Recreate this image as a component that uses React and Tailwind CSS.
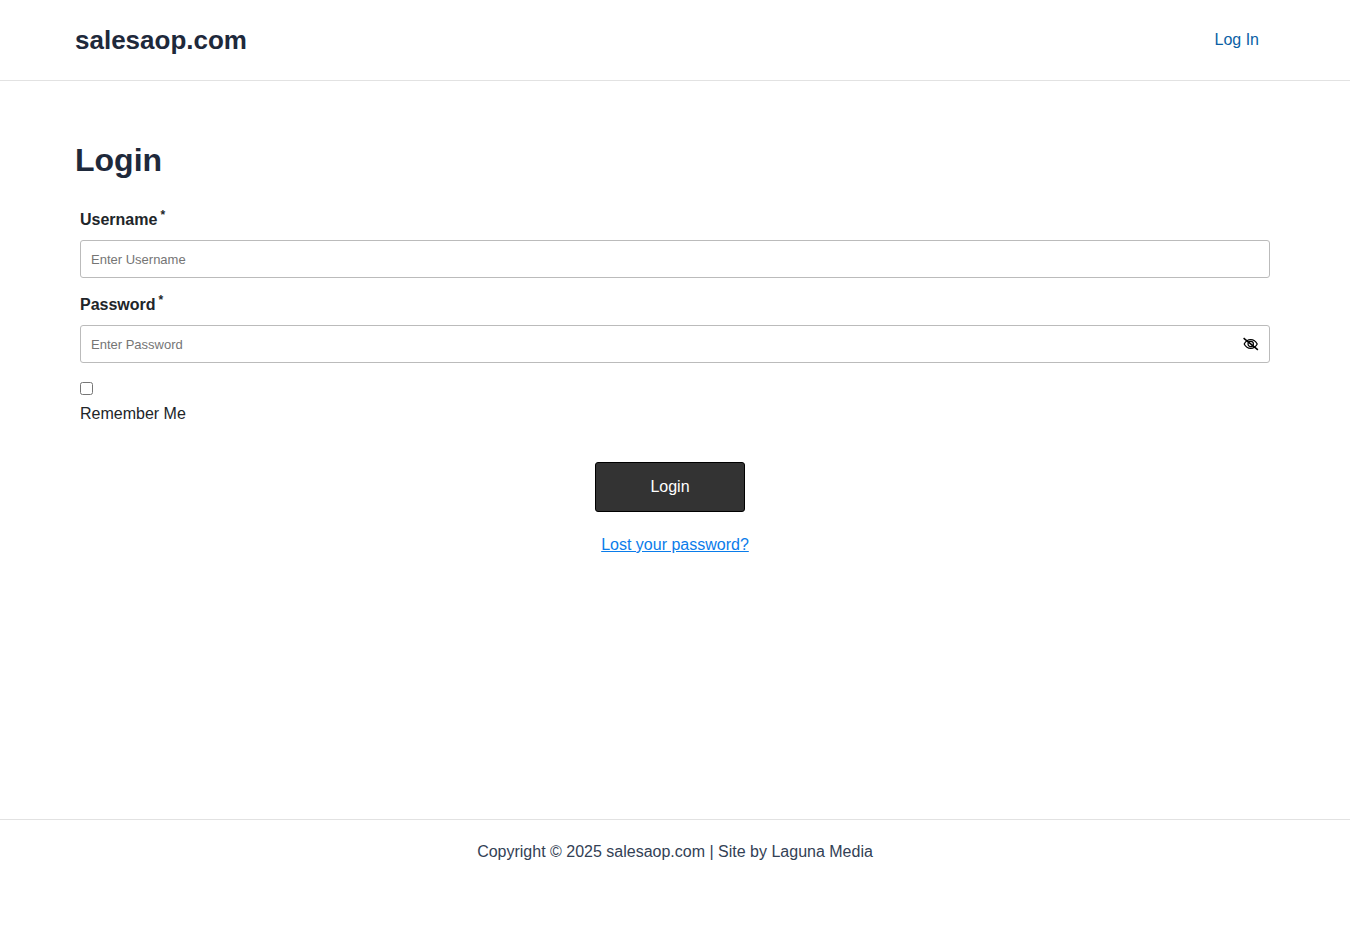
import { useState } from 'react';

const EyeSlashIcon = () => (
  <svg width="16" height="16" viewBox="0 0 16 16" fill="none" stroke="currentColor" strokeWidth="1.2" aria-hidden="true">
    <path d="M1.2 8C2.6 5.2 5 3.6 7.7 3.6S12.8 5.2 14.2 8C12.8 10.8 10.4 12.4 7.7 12.4S2.6 10.8 1.2 8Z" />
    <circle cx="7.7" cy="8" r="2.7" />
    <path d="M0.6 2.2L14.9 13.8" strokeWidth="1.5" />
  </svg>
);

const EyeIcon = () => (
  <svg width="16" height="16" viewBox="0 0 16 16" fill="none" stroke="currentColor" strokeWidth="1.2" aria-hidden="true">
    <path d="M1.2 8C2.6 5.2 5 3.6 7.7 3.6S12.8 5.2 14.2 8C12.8 10.8 10.4 12.4 7.7 12.4S2.6 10.8 1.2 8Z" />
    <circle cx="7.7" cy="8" r="2.7" />
  </svg>
);

const inputClass =
  'block w-full h-[38px] px-2.5 rounded-[3px] border border-[#bbb] bg-white text-[13px] text-[#212529] placeholder:text-[#757575] focus:outline-none focus:border-[#0073e0]';

const FieldLabel = ({ htmlFor, children }) => (
  <label htmlFor={htmlFor} className="block mb-2 font-bold leading-6">
    {children}
    <sup className="ml-[3px] text-xs">*</sup>
  </label>
);

const LoginForm = () => {
  const [username, setUsername] = useState('');
  const [password, setPassword] = useState('');
  const [remember, setRemember] = useState(false);
  const [showPassword, setShowPassword] = useState(false);

  return (
    <form onSubmit={(e) => e.preventDefault()} className="px-[5px] text-base text-[#212529]">
      <div className="mb-[15px]">
        <FieldLabel htmlFor="username">Username</FieldLabel>
        <input
          id="username"
          type="text"
          value={username}
          onChange={(e) => setUsername(e.target.value)}
          placeholder="Enter Username"
          className={inputClass}
        />
      </div>

      <div>
        <FieldLabel htmlFor="password">Password</FieldLabel>
        <div className="relative">
          <input
            id="password"
            type={showPassword ? 'text' : 'password'}
            value={password}
            onChange={(e) => setPassword(e.target.value)}
            placeholder="Enter Password"
            className={`${inputClass} pr-10`}
          />
          <button
            type="button"
            onClick={() => setShowPassword(!showPassword)}
            aria-label={showPassword ? 'Hide password' : 'Show password'}
            className="absolute inset-y-0 right-[11px] flex items-center text-black"
          >
            {showPassword ? <EyeIcon /> : <EyeSlashIcon />}
          </button>
        </div>
      </div>

      <div className="mt-[19px]">
        <input
          id="remember"
          type="checkbox"
          checked={remember}
          onChange={(e) => setRemember(e.target.checked)}
          className="block w-[13px] h-[13px]"
        />
        <label htmlFor="remember" className="block mt-[7px] leading-6">
          Remember Me
        </label>
      </div>

      <div className="mt-9 mr-2.5 flex justify-center">
        <button type="submit" className="w-[150px] h-[50px] rounded-[3px] border border-black bg-[#333] text-white">
          Login
        </button>
      </div>
      <p className="mt-[21px] text-center leading-6">
        <a href="#lost-password" className="text-[#0a7cea] underline">Lost your password?</a>
      </p>
    </form>
  );
};

const App = () => (
  <div className="flex min-h-screen flex-col bg-white font-['Liberation_Sans',Arial,sans-serif] text-base">
    <header className="border-b border-[#e2e2e2] px-5">
      <div className="mx-auto flex h-20 max-w-[1200px] items-center justify-between">
        <a href="#home" className="text-[26px] font-bold leading-10 text-[#1e293b]">salesaop.com</a>
        <nav className="px-4">
          <a href="#login" className="text-[#0a5fa5]">Log In</a>
        </nav>
      </div>
    </header>

    <main className="w-full grow px-5 pt-[58px]">
      <div className="mx-auto max-w-[1200px]">
        <h1 className="mb-[27px] text-[32px] font-bold leading-[42px] text-[#1e293b]">Login</h1>
        <LoginForm />
      </div>
    </main>

    <footer className="border-t border-[#e2e2e2] pt-5 pb-[76px] text-center leading-6 text-[#334155]">
      Copyright © 2025 salesaop.com | Site by Laguna Media
    </footer>
  </div>
);

export default App;
